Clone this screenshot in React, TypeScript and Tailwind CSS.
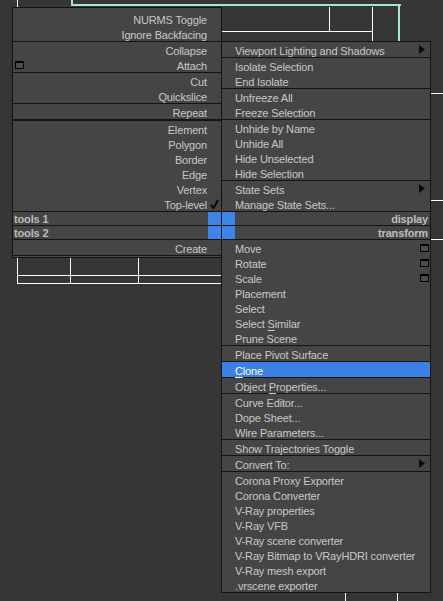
import React from 'react';

const text = "font-['Liberation_Sans',Arial,sans-serif] text-[11px] leading-none tracking-[-0.15px] text-[#c8c8c8]";

const Sep = ({ h = 'h-px' }: { h?: string }) => <div className={`${h} bg-[#141414] w-full`} />;

const MiniBox = () => (
  <div className="w-[9px] h-[8px] border border-black border-t-2 bg-[#4c4c4c]" />
);

const Arrow = () => (
  <svg width="6" height="9" viewBox="0 0 6 9">
    <path d="M0 0 L6 4.5 L0 9 Z" fill="#0c0c0c" />
  </svg>
);

const Check = () => (
  <svg width="9" height="10" viewBox="0 0 9 10">
    <path d="M1 6 L3.5 9 L8 1" stroke="#0a0a0a" strokeWidth="2" fill="none" />
  </svg>
);

const U = ({ children }: { children: React.ReactNode }) => (
  <span className="underline underline-offset-2 decoration-1">{children}</span>
);

const LeftRow = ({ children, icon, check }: { children: React.ReactNode; icon?: boolean; check?: boolean }) => (
  <div className="h-[15px] flex items-center">
    <div className="w-[13px] pl-[2px] flex items-center">{icon && <MiniBox />}</div>
    <div className="flex-1 text-right pt-[3px]">{children}</div>
    <div className="w-[14px] flex items-center justify-center">{check && <Check />}</div>
  </div>
);

const RightRow = ({
  children,
  icon,
  arrow,
  active,
}: {
  children: React.ReactNode;
  icon?: boolean;
  arrow?: boolean;
  active?: boolean;
}) => (
  <div className={`h-[15px] flex items-center pl-[13px] ${active ? 'bg-[#3b80e4] text-white' : ''}`}>
    <div className="flex-1 whitespace-nowrap pt-[3px]">{children}</div>
    {arrow && (
      <div className="pr-[5px] flex items-center">
        <Arrow />
      </div>
    )}
    {icon && (
      <div className="pr-px flex items-center">
        <MiniBox />
      </div>
    )}
  </div>
);

const ToolRowLeft = ({ label }: { label: string }) => (
  <div className="h-[13px] flex items-center">
    <div className="flex-1 pl-px pt-[2px] font-bold text-[#bdbdbd]">{label}</div>
    <div className="w-[13px] h-[13px] bg-[#3d85e6]" />
  </div>
);

const ToolRowRight = ({ label }: { label: string }) => (
  <div className="h-[13px] flex items-center">
    <div className="w-[13px] h-[13px] bg-[#3d85e6]" />
    <div className="flex-1 text-right pr-[2px] pt-[2px] font-bold text-[#bdbdbd]">{label}</div>
  </div>
);

const LeftMenu = () => (
  <div className={`absolute left-[12px] top-[7px] w-[210px] bg-[#454545] border-x border-t border-[#141414] ${text}`}>
    <div className="h-[3px]" />
    <LeftRow>NURMS Toggle</LeftRow>
    <LeftRow>Ignore Backfacing</LeftRow>
    <Sep />
    <LeftRow>Collapse</LeftRow>
    <LeftRow icon>Attach</LeftRow>
    <Sep />
    <LeftRow>Cut</LeftRow>
    <LeftRow>Quickslice</LeftRow>
    <Sep />
    <LeftRow>Repeat</LeftRow>
    <Sep h="h-[2px]" />
    <LeftRow>Element</LeftRow>
    <LeftRow>Polygon</LeftRow>
    <LeftRow>Border</LeftRow>
    <LeftRow>Edge</LeftRow>
    <LeftRow>Vertex</LeftRow>
    <LeftRow check>Top-level</LeftRow>
    <Sep />
    <ToolRowLeft label="tools 1" />
    <Sep />
    <ToolRowLeft label="tools 2" />
    <Sep />
    <LeftRow>Create</LeftRow>
    <Sep />
    <div className="h-px bg-[#4a4a4a]" />
    <Sep />
  </div>
);

const RightMenu = () => (
  <div className={`absolute left-[221px] top-[41px] w-[210px] bg-[#454545] border border-[#141414] ${text}`}>
    <RightRow arrow>Viewport Lighting and Shadows</RightRow>
    <Sep />
    <RightRow>Isolate Selection</RightRow>
    <RightRow>End Isolate</RightRow>
    <Sep />
    <RightRow>Unfreeze All</RightRow>
    <RightRow>Freeze Selection</RightRow>
    <Sep />
    <RightRow>Unhide by Name</RightRow>
    <RightRow>Unhide All</RightRow>
    <RightRow>Hide Unselected</RightRow>
    <RightRow>Hide Selection</RightRow>
    <Sep />
    <RightRow arrow>State Sets</RightRow>
    <RightRow>Manage State Sets...</RightRow>
    <Sep />
    <ToolRowRight label="display" />
    <Sep />
    <ToolRowRight label="transform" />
    <Sep />
    <RightRow icon>Move</RightRow>
    <RightRow icon>Rotate</RightRow>
    <RightRow icon>Scale</RightRow>
    <RightRow>Placement</RightRow>
    <RightRow>Select</RightRow>
    <RightRow>
      Select <U>S</U>imilar
    </RightRow>
    <RightRow>Prune Scene</RightRow>
    <Sep />
    <RightRow>Place Pivot Surface</RightRow>
    <Sep />
    <RightRow active>
      <U>C</U>lone
    </RightRow>
    <Sep />
    <RightRow>
      Object <U>P</U>roperties...
    </RightRow>
    <Sep />
    <RightRow>Curve Editor...</RightRow>
    <RightRow>Dope Sheet...</RightRow>
    <RightRow>Wire Parameters...</RightRow>
    <Sep />
    <RightRow>Show Trajectories Toggle</RightRow>
    <Sep />
    <RightRow arrow>Convert To:</RightRow>
    <Sep />
    <RightRow>Corona Proxy Exporter</RightRow>
    <RightRow>Corona Converter</RightRow>
    <RightRow>V-Ray properties</RightRow>
    <RightRow>V-Ray VFB</RightRow>
    <RightRow>V-Ray scene converter</RightRow>
    <RightRow>V-Ray Bitmap to VRayHDRI converter</RightRow>
    <RightRow>V-Ray mesh export</RightRow>
    <RightRow>.vrscene exporter</RightRow>
  </div>
);

// viewport grid lines drawn behind the quad menu
const Viewport = () => (
  <>
    <div className="absolute left-[17px] top-0 w-px h-[7px] bg-white" />
    <div className="absolute left-[71px] top-0 w-[2px] h-[6px] bg-[#a6e4dc]" />
    <div className="absolute left-[71px] top-[4px] w-[330px] h-[2px] bg-[#a6e4dc]" />
    <div className="absolute left-[398px] top-[4px] w-[2px] h-[37px] bg-[#a6e4dc]" />
    <div className="absolute left-[329px] top-[7px] w-px h-[24px] bg-white" />
    <div className="absolute left-[372px] top-[7px] w-px h-[34px] bg-white" />
    <div className="absolute left-[222px] top-[31px] w-[151px] h-px bg-white" />

    <div className="absolute left-[431px] top-[93px] w-[12px] h-px bg-white" />
    <div className="absolute left-[431px] top-[200px] w-[12px] h-px bg-white" />
    <div className="absolute left-[431px] top-[239px] w-[12px] h-px bg-white" />

    <div className="absolute left-[17px] top-[258px] w-px h-[26px] bg-white" />
    <div className="absolute left-[70px] top-[258px] w-px h-[26px] bg-white" />
    <div className="absolute left-[138px] top-[258px] w-px h-[26px] bg-white" />
    <div className="absolute left-[17px] top-[275px] w-[205px] h-px bg-white" />
    <div className="absolute left-[17px] top-[283px] w-[205px] h-px bg-white" />

    <div className="absolute left-[345px] top-[593px] w-px h-[8px] bg-white" />
    <div className="absolute left-[397px] top-[593px] w-px h-[8px] bg-white" />
  </>
);

export default function App() {
  return (
    <div className="relative w-[443px] h-[601px] overflow-hidden bg-[#363636]">
      <Viewport />
      <LeftMenu />
      <RightMenu />
    </div>
  );
}
